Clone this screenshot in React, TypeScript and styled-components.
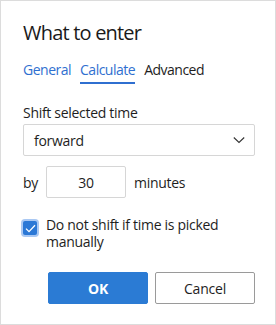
import React, { useState } from "react";
import styled, { createGlobalStyle } from "styled-components";

const Global = createGlobalStyle`
  html, body { margin: 0; padding: 0; background: #fff; }
  * { box-sizing: border-box; }
`;

const Dialog = styled.div`
  width: 276px;
  height: 325px;
  border: 1px solid #dcdcdc;
  padding: 19px 20px 0 22px;
  font-family: "Open Sans", "Noto Sans", sans-serif;
  color: #1e1e1e;
  display: flex;
  flex-direction: column;
`;

const Title = styled.h1`
  margin: 0;
  font-size: 20px;
  font-weight: 400;
  line-height: 26px;
  letter-spacing: -0.8px;
  color: #1a1a1a;
`;

const Tabs = styled.div`
  display: flex;
  gap: 9px;
  margin-top: 14px;
`;

const Tab = styled.div<{ $active?: boolean; $muted?: boolean }>`
  font-size: 14px;
  line-height: 20px;
  letter-spacing: -0.5px;
  padding-bottom: 2px;
  color: ${(p) => (p.$muted ? "#1e1e1e" : "#2f6fd0")};
  border-bottom: 2px solid ${(p) => (p.$active ? "#2f6fd0" : "transparent")};
`;

const Label = styled.div`
  margin-top: 19px;
  font-size: 14px;
  line-height: 20px;
  letter-spacing: -0.3px;
`;

const Select = styled.div`
  margin-top: 1px;
  height: 32px;
  border: 1px solid #d6d6d6;
  border-radius: 2px;
  display: flex;
  align-items: center;
  justify-content: space-between;
  padding: 0 9px 0 10px;
  font-size: 14px;
  letter-spacing: -0.3px;
`;

const Row = styled.div`
  display: flex;
  align-items: center;
  margin-top: 10px;
  font-size: 14px;
  letter-spacing: -0.3px;
`;

const NumberBox = styled.div`
  width: 80px;
  height: 32px;
  margin: 0 8px 0 8px;
  border: 1px solid #d6d6d6;
  border-radius: 2px;
  display: flex;
  align-items: center;
  justify-content: center;
`;

const CheckRow = styled.label`
  display: flex;
  align-items: flex-start;
  gap: 9px;
  margin-top: 18px;
  font-size: 14px;
  line-height: 17px;
  letter-spacing: -0.3px;
`;

const Box = styled.span`
  flex: none;
  width: 14px;
  height: 14px;
  margin: 5px 0 0 0;
  border-radius: 2px;
  background: #2b78d6;
  box-shadow: 0 0 0 2px #a9c8f3;
  display: flex;
  align-items: center;
  justify-content: center;
`;

const Buttons = styled.div`
  display: flex;
  justify-content: flex-end;
  gap: 7px;
  margin-top: 22px;
`;

const Button = styled.button<{ $primary?: boolean }>`
  width: 100px;
  height: 32px;
  border-radius: 2px;
  font-family: inherit;
  font-size: 14px;
  letter-spacing: -0.2px;
  font-weight: ${(p) => (p.$primary ? 700 : 400)};
  color: ${(p) => (p.$primary ? "#fff" : "#1e1e1e")};
  background: ${(p) => (p.$primary ? "#2b7bd4" : "#fff")};
  border: 1px solid ${(p) => (p.$primary ? "#2b7bd4" : "#9a9a9a")};
  padding: 0;
`;

export default function App() {
  const [checked] = useState(true);
  return (
    <>
      <Global />
      <Dialog>
        <Title>What to enter</Title>
        <Tabs>
          <Tab>General</Tab>
          <Tab $active>Calculate</Tab>
          <Tab $muted>Advanced</Tab>
        </Tabs>
        <Label>Shift selected time</Label>
        <Select>
          <span>forward</span>
          <svg width="12" height="8" viewBox="0 0 12 8">
            <path d="M0.8 1.5 L6 6.5 L11.2 1.5" fill="none" stroke="#333" strokeWidth="1.1" />
          </svg>
        </Select>
        <Row>
          by
          <NumberBox>30</NumberBox>
          minutes
        </Row>
        <CheckRow>
          <Box>
            {checked && (
              <svg width="11" height="9" viewBox="0 0 11 9">
                <path d="M1 4.6 L4 7.6 L10 1.3" fill="none" stroke="#fff" strokeWidth="1.3" />
              </svg>
            )}
          </Box>
          <span>Do not shift if time is picked manually</span>
        </CheckRow>
        <Buttons>
          <Button $primary>OK</Button>
          <Button>Cancel</Button>
        </Buttons>
      </Dialog>
    </>
  );
}
